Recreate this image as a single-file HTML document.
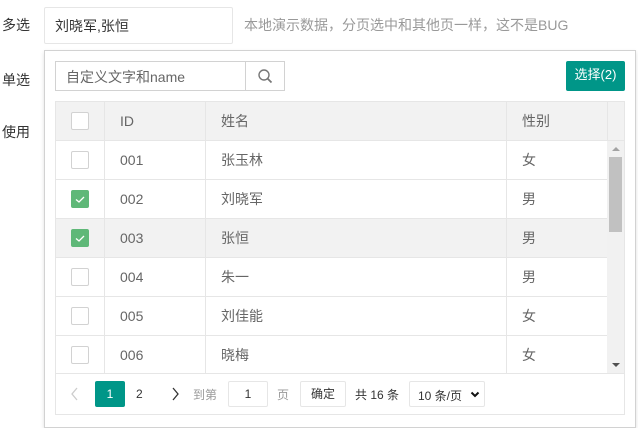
<!DOCTYPE html>
<html><head><meta charset="utf-8"><style>
*{box-sizing:border-box;margin:0;padding:0}
body{width:638px;height:428px;overflow:hidden;background:#fff;font-family:"Liberation Sans","Noto Sans CJK SC",sans-serif;font-size:14px;color:#333;position:relative}
.a{position:absolute}
.lbl{left:2px;font-size:14px;color:#333}
.cb{position:absolute;width:18px;height:18px;border:1px solid #d2d2d2;border-radius:2px;background:#fff}
.cb.on{background:#5fb878;border-color:#5fb878}
.cell{position:absolute;color:#666;font-size:14px}
.z{margin-top:-2px}
</style></head><body>
<div class="a lbl" style="top:15px">多选</div>
<div class="a lbl" style="top:70px">单选</div>
<div class="a lbl" style="top:122px">使用</div>
<div class="a" style="left:44px;top:7px;width:189px;height:37px;border:1px solid #e6e6e6;border-radius:2px;padding:8px 0 0 10px;color:#333">刘晓军,张恒</div>
<div class="a" style="left:244px;top:15px;color:#999;font-size:14px">本地演示数据，分页选中和其他页一样，这不是BUG</div>
<div class="a" style="left:44px;top:50px;width:592px;height:378px;border:1px solid #d2d2d2;background:#fff;box-shadow:0 2px 4px rgba(0,0,0,.12)"></div>
<div class="a" style="left:55px;top:61px;width:190px;height:30px;border:1px solid #d2d2d2;border-right:none;padding:5px 0 0 10px;color:#666">自定义文字和name</div>
<div class="a" style="left:245px;top:61px;width:40px;height:30px;border:1px solid #d2d2d2">
<svg width="38" height="28" viewBox="0 0 38 28"><circle cx="18" cy="13" r="5" fill="none" stroke="#777" stroke-width="1.4"/><path d="M21.5 16.5l4 4" stroke="#777" stroke-width="1.8"/></svg></div>
<div class="a" style="left:566px;top:61px;width:59px;height:30px;background:#009688;border-radius:2px;color:#fff;font-size:13px;text-align:center;line-height:28px">选择(2)</div>
<div class="a" style="left:55px;top:101px;width:570px;height:314px;border:1px solid #e6e6e6"></div>
<div class="a" style="left:56px;top:102px;width:568px;height:39px;background:#f2f2f2;border-bottom:1px solid #e6e6e6"></div>
<div class="a" style="left:56px;top:219px;width:551px;height:39px;background:#f2f2f2"></div>
<div class="a" style="left:607px;top:141px;width:17px;height:233px;background:#f1f1f1"></div>
<div class="a" style="left:609px;top:157px;width:13px;height:75px;background:#c1c1c1"></div>
<div class="a" style="left:612px;top:147px;width:0;height:0;border:4px solid transparent;border-bottom-color:#a3a3a3;border-top:0"></div>
<div class="a" style="left:612px;top:363px;width:0;height:0;border:4px solid transparent;border-top-color:#505050;border-bottom:0"></div>
<div class="a" style="left:56px;top:179px;width:551px;border-top:1px solid #e6e6e6"></div>
<div class="a" style="left:56px;top:218px;width:551px;border-top:1px solid #e6e6e6"></div>
<div class="a" style="left:56px;top:257px;width:551px;border-top:1px solid #e6e6e6"></div>
<div class="a" style="left:56px;top:296px;width:551px;border-top:1px solid #e6e6e6"></div>
<div class="a" style="left:56px;top:335px;width:551px;border-top:1px solid #e6e6e6"></div>
<div class="a" style="left:56px;top:373px;width:568px;border-top:1px solid #e6e6e6"></div>
<div class="a" style="left:104px;top:102px;height:271px;border-left:1px solid #e6e6e6"></div>
<div class="a" style="left:205px;top:102px;height:271px;border-left:1px solid #e6e6e6"></div>
<div class="a" style="left:506px;top:102px;height:271px;border-left:1px solid #e6e6e6"></div>
<div class="a" style="left:607px;top:102px;height:39px;border-left:1px solid #e6e6e6"></div>
<div class="cb" style="left:71px;top:112px"></div>
<div class="cell" style="left:120px;top:113px">ID</div>
<div class="cell z" style="left:221px;top:113px">姓名</div>
<div class="cell z" style="left:522px;top:113px">性别</div>
<div class="cb" style="left:71px;top:151px"></div><div class="cell" style="left:120px;top:152px">001</div><div class="cell z" style="left:221px;top:152px">张玉林</div><div class="cell z" style="left:522px;top:152px">女</div>
<div class="cb on" style="left:71px;top:190px"><svg width="16" height="16"><path d="M4 8.5l3 2.5 5-5" stroke="#fff" stroke-width="1.3" fill="none"/></svg></div><div class="cell" style="left:120px;top:191px">002</div><div class="cell z" style="left:221px;top:191px">刘晓军</div><div class="cell z" style="left:522px;top:191px">男</div>
<div class="cb on" style="left:71px;top:229px"><svg width="16" height="16"><path d="M4 8.5l3 2.5 5-5" stroke="#fff" stroke-width="1.3" fill="none"/></svg></div><div class="cell" style="left:120px;top:230px">003</div><div class="cell z" style="left:221px;top:230px">张恒</div><div class="cell z" style="left:522px;top:230px">男</div>
<div class="cb" style="left:71px;top:268px"></div><div class="cell" style="left:120px;top:269px">004</div><div class="cell z" style="left:221px;top:269px">朱一</div><div class="cell z" style="left:522px;top:269px">男</div>
<div class="cb" style="left:71px;top:307px"></div><div class="cell" style="left:120px;top:308px">005</div><div class="cell z" style="left:221px;top:308px">刘佳能</div><div class="cell z" style="left:522px;top:308px">女</div>
<div class="cb" style="left:71px;top:346px"></div><div class="cell" style="left:120px;top:347px">006</div><div class="cell z" style="left:221px;top:347px">晓梅</div><div class="cell z" style="left:522px;top:347px">女</div>
<svg class="a" style="left:70px;top:386px" width="10" height="16"><path d="M7 2L2 8l5 6" stroke="#ccc" stroke-width="1.3" fill="none"/></svg>
<div class="a" style="left:95px;top:381px;width:30px;height:26px;background:#009688;border-radius:2px;color:#fff;font-size:12px;text-align:center;line-height:26px">1</div>
<div class="a" style="left:136px;top:387px;font-size:12px;color:#333">2</div>
<svg class="a" style="left:170px;top:386px" width="10" height="16"><path d="M3 2l5 6-5 6" stroke="#333" stroke-width="1.3" fill="none"/></svg>
<div class="a" style="left:193px;top:386px;font-size:12px;color:#999">到第</div>
<div class="a" style="left:228px;top:381px;width:40px;height:26px;border:1px solid #e6e6e6;border-radius:2px;text-align:center;line-height:24px;font-size:12px">1</div>
<div class="a" style="left:277px;top:386px;font-size:12px;color:#999">页</div>
<div class="a" style="left:300px;top:381px;width:46px;height:26px;border:1px solid #e6e6e6;border-radius:2px;text-align:center;line-height:24px;font-size:12px">确定</div>
<div class="a" style="left:355px;top:386px;font-size:12px;color:#333">共 16 条</div>
<div class="a" style="left:409px;top:381px;width:76px;height:26px;border:1px solid #e6e6e6;border-radius:2px;padding:5px 0 0 8px;font-size:12px;color:#333">10 条/页</div>
<svg class="a" style="left:470px;top:391px" width="10" height="8"><path d="M1.5 1.5L5 5l3.5-3.5" stroke="#111" stroke-width="2" fill="none"/></svg>
</body></html>
